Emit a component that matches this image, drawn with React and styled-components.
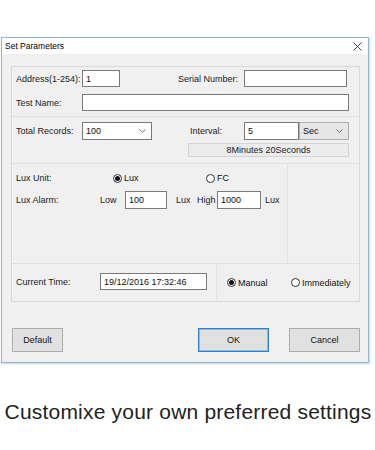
import React from "react";
import styled, { createGlobalStyle } from "styled-components";

const GlobalStyle = createGlobalStyle`
  html, body { margin: 0; padding: 0; background: #fff; }
  body { font-family: "Liberation Sans", Arial, sans-serif; }
  * { box-sizing: border-box; }
`;

const Page = styled.div`
  width: 375px;
  height: 450px;
  padding: 37px 0 0 1px;
  display: flex;
  flex-direction: column;
  overflow: hidden;
`;

const Dialog = styled.div`
  width: 368px;
  border: 1px solid #8fb4da;
  background: #f0f0f0;
  box-shadow: 1px 1px 2px rgba(0, 0, 0, 0.18);
  font-size: 9px;
  color: #111;
`;

const TitleBar = styled.div`
  height: 16px;
  background: #fff;
  display: flex;
  align-items: center;
  justify-content: space-between;
  padding: 0 6px 0 3px;
  font-size: 8.5px;
  color: #000;
`;

const Body = styled.div`
  padding: 12px 8px 10px 9px;
`;

const Panel = styled.div`
  border: 1px solid #d9d9d9;
  display: flex;
  flex-direction: column;
`;

const Section = styled.div`
  padding: ${(p) => p.$pad};
  border-bottom: 1px solid #e2e2e2;
  display: flex;
  flex-direction: column;
  gap: ${(p) => p.$gap || 0}px;
`;

const Split = styled.div`
  display: grid;
  grid-template-columns: ${(p) => p.$left}px 1fr;
  min-height: ${(p) => p.$h}px;
  border-bottom: ${(p) => (p.$last ? "none" : "1px solid #e2e2e2")};
`;

const Col = styled.div`
  padding: ${(p) => p.$pad || 0};
  border-right: ${(p) => (p.$divide ? "1px solid #e2e2e2" : "none")};
  display: flex;
  flex-direction: ${(p) => (p.$row ? "row" : "column")};
  align-items: ${(p) => (p.$row ? "center" : "stretch")};
  gap: ${(p) => p.$gap || 0}px;
`;

const Row = styled.div`
  display: flex;
  align-items: center;
  height: ${(p) => p.$h || 17}px;
  padding: 0 ${(p) => p.$pr || 0}px 0 4px;
`;

const Label = styled.span`
  width: ${(p) => (p.$w ? `${p.$w}px` : "auto")};
  margin-left: ${(p) => p.$ml || 0}px;
  flex-shrink: 0;
  white-space: nowrap;
  color: #1a1a1a;
`;

const Input = styled.div`
  width: ${(p) => (p.$w ? `${p.$w}px` : "auto")};
  flex: ${(p) => (p.$grow ? 1 : "none")};
  height: ${(p) => p.$h || 17}px;
  margin-left: ${(p) => p.$ml || 0}px;
  background: #fff;
  border: 1px solid #7a7a7a;
  display: flex;
  align-items: center;
  padding-left: 3px;
  color: #111;
  white-space: nowrap;
`;

const Select = styled.div`
  width: ${(p) => p.$w}px;
  height: 18px;
  margin-left: ${(p) => p.$ml || 0}px;
  background: ${(p) => (p.$flat ? "#e6e6e6" : "#fff")};
  border: 1px solid ${(p) => (p.$flat ? "#adadad" : "#7a7a7a")};
  display: flex;
  align-items: center;
  justify-content: space-between;
  padding: 0 5px 0 3px;
  color: #111;
`;

const InfoBox = styled.div`
  margin-left: 176px;
  width: 161px;
  height: 14px;
  border: 1px solid #d4d4d4;
  background: #ececec;
  display: flex;
  align-items: center;
  justify-content: center;
  color: #222;
`;

const Radio = styled.span`
  display: inline-flex;
  align-items: center;
  gap: 2px;
  width: ${(p) => (p.$w ? `${p.$w}px` : "auto")};
  flex-shrink: 0;
  white-space: nowrap;
`;

const Circle = styled.span`
  width: 9px;
  height: 9px;
  border-radius: 50%;
  border: 1px solid #333;
  background: #fff;
  display: inline-flex;
  align-items: center;
  justify-content: center;
  &::after {
    content: "";
    width: 5px;
    height: 5px;
    border-radius: 50%;
    background: ${(p) => (p.$on ? "#111" : "transparent")};
  }
`;

const ButtonRow = styled.div`
  display: flex;
  align-items: center;
  margin-top: 26px;
  padding: 0 0 0 1px;
  gap: 20px;
`;

const Button = styled.div`
  width: ${(p) => p.$w}px;
  height: 24px;
  margin-left: ${(p) => (p.$push ? "auto" : "0")};
  background: #e1e1e1;
  border: 1px solid ${(p) => (p.$primary ? "#2f7fd0" : "#adadad")};
  box-shadow: ${(p) => (p.$primary ? "inset 0 0 0 1px #8fbbe8" : "none")};
  display: flex;
  align-items: center;
  justify-content: center;
  color: #111;
`;

const Caption = styled.div`
  margin-top: 37px;
  text-align: center;
  white-space: nowrap;
  font-family: "Liberation Sans", Arial, sans-serif;
  font-size: 21px;
  letter-spacing: 0.2px;
  color: #222;
`;

const Chevron = () => (
  <svg width="7" height="4" viewBox="0 0 7 4">
    <path d="M0.5 0.5 L3.5 3.3 L6.5 0.5" fill="none" stroke="#666" strokeWidth="0.9" />
  </svg>
);

const CloseIcon = () => (
  <svg width="9" height="9" viewBox="0 0 9 9">
    <path d="M0.5 0.5 L8.5 8.5 M8.5 0.5 L0.5 8.5" stroke="#333" strokeWidth="0.9" />
  </svg>
);

export default function App() {
  return (
    <>
      <GlobalStyle />
      <Page>
        <Dialog>
          <TitleBar>
            <span>Set Parameters</span>
            <CloseIcon />
          </TitleBar>
          <Body>
            <Panel>
              <Section $pad="3px 0 5px" $gap={7}>
                <Row $pr={11}>
                  <Label $w={66}>Address(1-254):</Label>
                  <Input $w={38}>1</Input>
                  <Label $ml={58}>Serial Number:</Label>
                  <Input $w={103} $ml={6}>&nbsp;</Input>
                </Row>
                <Row $pr={10}>
                  <Label $w={66}>Test Name:</Label>
                  <Input $grow>&nbsp;</Input>
                </Row>
              </Section>
              <Section $pad="5px 0 6px" $gap={3}>
                <Row $h={18}>
                  <Label $w={66}>Total Records:</Label>
                  <Select $w={70}>
                    <span>100</span>
                    <Chevron />
                  </Select>
                  <Label $w={54} $ml={38}>Interval:</Label>
                  <Input $w={55} $h={18}>5</Input>
                  <Select $w={50} $flat>
                    <span>Sec</span>
                    <Chevron />
                  </Select>
                </Row>
                <InfoBox>8Minutes 20Seconds</InfoBox>
              </Section>
              <Split $left={276} $h={100}>
                <Col $divide $pad="7px 0 0" $gap={6}>
                  <Row $h={14}>
                    <Label $w={97}>Lux Unit:</Label>
                    <Radio $w={93}>
                      <Circle $on />
                      Lux
                    </Radio>
                    <Radio>
                      <Circle />
                      FC
                    </Radio>
                  </Row>
                  <Row $h={18}>
                    <Label $w={84}>Lux Alarm:</Label>
                    <Label $w={25}>Low</Label>
                    <Input $w={42} $h={18}>100</Input>
                    <Label $w={21} $ml={9}>Lux</Label>
                    <Label $w={20}>High</Label>
                    <Input $w={44} $h={18}>1000</Input>
                    <Label $ml={4}>Lux</Label>
                  </Row>
                </Col>
                <Col />
              </Split>
              <Split $left={205} $h={37} $last>
                <Col $divide $pad="9px 0 0">
                  <Row>
                    <Label $w={84}>Current Time:</Label>
                    <Input $w={107}>19/12/2016 17:32:46</Input>
                  </Row>
                </Col>
                <Col $row $pad="0 0 0 10px">
                  <Radio $w={64}>
                    <Circle $on />
                    Manual
                  </Radio>
                  <Radio>
                    <Circle />
                    Immediately
                  </Radio>
                </Col>
              </Split>
            </Panel>
            <ButtonRow>
              <Button $w={51}>Default</Button>
              <Button $w={71} $push $primary>
                OK
              </Button>
              <Button $w={71}>Cancel</Button>
            </ButtonRow>
          </Body>
        </Dialog>
        <Caption>Customixe your own preferred settings</Caption>
      </Page>
    </>
  );
}
